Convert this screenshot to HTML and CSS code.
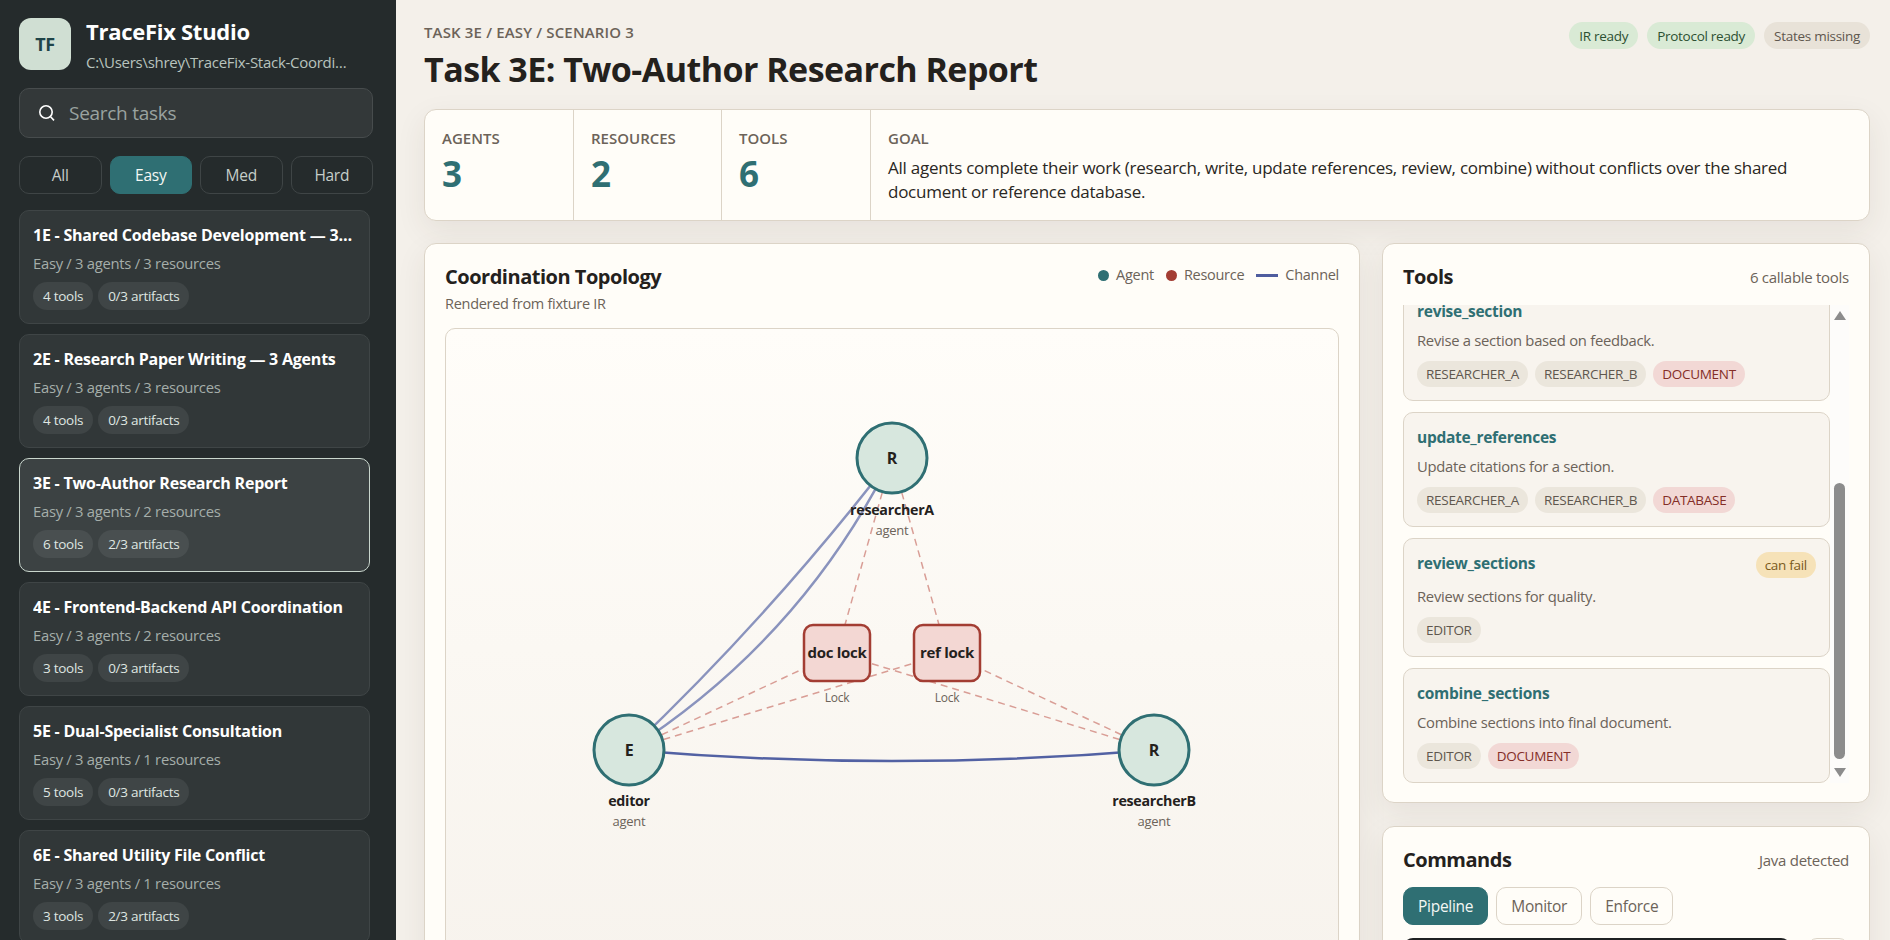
FILE: index.html
```html
<!DOCTYPE html>
<html lang="en">

<head>
    <meta charset="UTF-8">
    <meta name="viewport" content="width=device-width, initial-scale=1.0">
    <title>TraceFix Studio</title>
    <link rel="stylesheet" href="styles.css">
</head>

<body>
    <div class="app">
        <aside class="sidebar">
            <div class="brand">
                <div class="brand-logo">TF</div>
                <div class="brand-text">
                    <h1 class="brand-name">TraceFix Studio</h1>
                    <p class="brand-path">C:\Users\shrey\TraceFix-Stack-Coordination</p>
                </div>
            </div>
            <label class="search">
                <svg class="search-icon" viewBox="0 0 18 18" width="18" height="18" fill="none" stroke="#ffffff" stroke-width="1.6">
                    <circle cx="8" cy="8" r="6.2"></circle>
                    <path d="M12.6 12.8 16 16.4"></path>
                </svg>
                <span class="search-placeholder">Search tasks</span>
            </label>
            <div class="filters">
                <button class="filter">All</button>
                <button class="filter active">Easy</button>
                <button class="filter">Med</button>
                <button class="filter">Hard</button>
            </div>
            <div class="task-list">
                <div class="task-card">
                    <div class="task-title">1E - Shared Codebase Development — 3 Agents</div>
                    <div class="task-meta">Easy / 3 agents / 3 resources</div>
                    <div class="task-chips"><span class="chip">4 tools</span><span class="chip">0/3 artifacts</span></div>
                </div>
                <div class="task-card">
                    <div class="task-title">2E - Research Paper Writing — 3 Agents</div>
                    <div class="task-meta">Easy / 3 agents / 3 resources</div>
                    <div class="task-chips"><span class="chip">4 tools</span><span class="chip">0/3 artifacts</span></div>
                </div>
                <div class="task-card selected">
                    <div class="task-title">3E - Two-Author Research Report</div>
                    <div class="task-meta">Easy / 3 agents / 2 resources</div>
                    <div class="task-chips"><span class="chip">6 tools</span><span class="chip">2/3 artifacts</span></div>
                </div>
                <div class="task-card">
                    <div class="task-title">4E - Frontend-Backend API Coordination</div>
                    <div class="task-meta">Easy / 3 agents / 2 resources</div>
                    <div class="task-chips"><span class="chip">3 tools</span><span class="chip">0/3 artifacts</span></div>
                </div>
                <div class="task-card">
                    <div class="task-title">5E - Dual-Specialist Consultation</div>
                    <div class="task-meta">Easy / 3 agents / 1 resources</div>
                    <div class="task-chips"><span class="chip">5 tools</span><span class="chip">0/3 artifacts</span></div>
                </div>
                <div class="task-card">
                    <div class="task-title">6E - Shared Utility File Conflict</div>
                    <div class="task-meta">Easy / 3 agents / 1 resources</div>
                    <div class="task-chips"><span class="chip">3 tools</span><span class="chip">2/3 artifacts</span></div>
                </div>
            </div>
        </aside>

        <main class="main">
            <header class="page-head">
                <div>
                    <div class="eyebrow">Task 3E / Easy / Scenario 3</div>
                    <h2 class="page-title">Task 3E: Two-Author Research Report</h2>
                </div>
                <div class="badges">
                    <span class="badge ready">IR ready</span>
                    <span class="badge ready">Protocol ready</span>
                    <span class="badge missing">States missing</span>
                </div>
            </header>

            <section class="stats panel">
                <div class="stat">
                    <div class="stat-label">Agents</div>
                    <div class="stat-value">3</div>
                </div>
                <div class="stat">
                    <div class="stat-label">Resources</div>
                    <div class="stat-value">2</div>
                </div>
                <div class="stat">
                    <div class="stat-label">Tools</div>
                    <div class="stat-value">6</div>
                </div>
                <div class="stat goal">
                    <div class="stat-label">Goal</div>
                    <p class="goal-text">All agents complete their work (research, write, update references, review, combine) without conflicts over the shared document or reference database.</p>
                </div>
            </section>

            <div class="columns">
                <section class="panel topology">
                    <div class="topology-head">
                        <div>
                            <h3 class="panel-title">Coordination Topology</h3>
                            <p class="panel-sub">Rendered from fixture IR</p>
                        </div>
                        <div class="legend">
                            <span class="legend-item"><i class="dot agent"></i>Agent</span>
                            <span class="legend-item"><i class="dot resource"></i>Resource</span>
                            <span class="legend-item"><i class="line"></i>Channel</span>
                        </div>
                    </div>
                    <div class="canvas">
                        <svg class="graph" viewBox="0 0 892 640" width="892" height="640">
                            <g class="edge-lock">
                                <path d="M446 129 391 324"></path>
                                <path d="M446 129 501 324"></path>
                                <path d="M183 421 391 324"></path>
                                <path d="M183 421 501 324"></path>
                                <path d="M708 421 391 324"></path>
                                <path d="M708 421 501 324"></path>
                            </g>
                            <g class="edge-channel faded">
                                <path d="M183 421 Q326 285 446 129"></path>
                                <path d="M183 421 Q355 311 446 129"></path>
                            </g>
                            <g class="edge-channel">
                                <path d="M183 421 Q446 443 708 421"></path>
                            </g>

                            <rect class="res-box" x="358" y="296" width="66" height="56" rx="9"></rect>
                            <text class="res-name" x="391" y="329">doc lock</text>
                            <text class="node-kind small" x="391" y="373">Lock</text>
                            <rect class="res-box" x="468" y="296" width="66" height="56" rx="9"></rect>
                            <text class="res-name" x="501" y="329">ref lock</text>
                            <text class="node-kind small" x="501" y="373">Lock</text>

                            <circle class="node" cx="446" cy="129" r="35"></circle>
                            <text class="node-letter" x="446" y="135">R</text>
                            <text class="node-name" x="446" y="186">researcherA</text>
                            <text class="node-kind" x="446" y="206">agent</text>

                            <circle class="node" cx="183" cy="421" r="35"></circle>
                            <text class="node-letter" x="183" y="427">E</text>
                            <text class="node-name" x="183" y="477">editor</text>
                            <text class="node-kind" x="183" y="497">agent</text>

                            <circle class="node" cx="708" cy="421" r="35"></circle>
                            <text class="node-letter" x="708" y="427">R</text>
                            <text class="node-name" x="708" y="477">researcherB</text>
                            <text class="node-kind" x="708" y="497">agent</text>
                        </svg>
                    </div>
                </section>

                <div class="side">
                    <section class="panel tools">
                        <div class="panel-head">
                            <h3 class="panel-title">Tools</h3>
                            <span class="panel-note">6 callable tools</span>
                        </div>
                        <div class="tools-body">
                            <div class="tool-list">
                                <div class="tool-card">
                                    <div class="tool-name">revise_section</div>
                                    <p class="tool-desc">Revise a section based on feedback.</p>
                                    <div class="tags"><span class="tag">RESEARCHER_A</span><span class="tag">RESEARCHER_B</span><span class="tag res">DOCUMENT</span></div>
                                </div>
                                <div class="tool-card">
                                    <div class="tool-name">update_references</div>
                                    <p class="tool-desc">Update citations for a section.</p>
                                    <div class="tags"><span class="tag">RESEARCHER_A</span><span class="tag">RESEARCHER_B</span><span class="tag res">DATABASE</span></div>
                                </div>
                                <div class="tool-card">
                                    <div class="tool-top">
                                        <div class="tool-name">review_sections</div>
                                        <span class="tag warn">can fail</span>
                                    </div>
                                    <p class="tool-desc">Review sections for quality.</p>
                                    <div class="tags"><span class="tag">EDITOR</span></div>
                                </div>
                                <div class="tool-card">
                                    <div class="tool-name">combine_sections</div>
                                    <p class="tool-desc">Combine sections into final document.</p>
                                    <div class="tags"><span class="tag">EDITOR</span><span class="tag res">DOCUMENT</span></div>
                                </div>
                            </div>
                            <div class="scrollbar">
                                <i class="arrow up"></i>
                                <div class="scroll-track"><div class="scroll-thumb"></div></div>
                                <i class="arrow down"></i>
                            </div>
                        </div>
                    </section>

                    <section class="panel commands">
                        <div class="panel-head">
                            <h3 class="panel-title">Commands</h3>
                            <span class="panel-note">Java detected</span>
                        </div>
                        <div class="cmd-tabs">
                            <button class="cmd-tab active">Pipeline</button>
                            <button class="cmd-tab">Monitor</button>
                            <button class="cmd-tab">Enforce</button>
                        </div>
                        <div class="cmd-row">
                            <div class="cmd-box"></div>
                            <button class="cmd-copy"></button>
                        </div>
                    </section>
                </div>
            </div>
        </main>
    </div>
</body>

</html>
```

FILE: styles.css
```css
* {
    box-sizing: border-box;
}

html,
body {
    margin: 0;
    padding: 0;
    height: 100%;
    overflow: hidden;
}

body {
    font-family: "Open Sans", "Noto Sans", sans-serif;
    font-size: 14px;
    letter-spacing: -0.02em;
    color: #24211d;
    background-color: #f4f0ea;
}

h1,
h2,
h3,
p {
    margin: 0;
    padding: 0;
}

button {
    font-family: inherit;
    letter-spacing: inherit;
}

.app {
    display: flex;
    height: 940px;
    overflow: hidden;
}

/* sidebar */

.sidebar {
    width: 396px;
    flex-shrink: 0;
    padding: 18px 23px 0 19px;
    background-color: #252b2c;
    overflow: hidden;
}

.brand {
    display: flex;
    align-items: center;
    gap: 15px;
    height: 52px;
}

.brand-logo {
    width: 52px;
    height: 52px;
    flex-shrink: 0;
    display: flex;
    align-items: center;
    justify-content: center;
    border-radius: 12px;
    background-color: #d0dfd3;
    color: #1f4448;
    font-size: 18px;
    font-weight: 700;
}

.brand-text {
    min-width: 0;
}

.brand-name {
    font-size: 22px;
    line-height: 28px;
    font-weight: 700;
    color: #ffffff;
}

.brand-path {
    margin-top: 7px;
    width: 266px;
    font-size: 15px;
    line-height: 20px;
    color: #b8c3be;
    white-space: nowrap;
    overflow: hidden;
    text-overflow: ellipsis;
}

.search {
    display: flex;
    align-items: center;
    gap: 13px;
    height: 50px;
    margin-top: 18px;
    padding: 0 18px;
    border: 1px solid #474c4d;
    border-radius: 10px;
    background-color: #333839;
}

.search-icon {
    flex-shrink: 0;
}

.search-placeholder {
    font-size: 19px;
    color: #9aa3a0;
}

.filters {
    display: flex;
    gap: 8px;
    margin-top: 18px;
}

.filter {
    flex: 1;
    height: 38px;
    padding: 0;
    border: 1px solid #3f4546;
    border-radius: 10px;
    background: transparent;
    color: #c5cec9;
    font-size: 15.5px;
}

.filter.active {
    border-color: #2f6f73;
    background-color: #2f6f73;
    color: #f4f7f3;
}

.task-list {
    display: flex;
    flex-direction: column;
    gap: 10px;
    margin-top: 16px;
    width: 351px;
}

.task-card {
    flex-shrink: 0;
    height: 114px;
    padding: 13px 13px 0;
    border: 1px solid #3f4546;
    border-radius: 10px;
    background-color: #313738;
}

.task-card.selected {
    border-color: #c9d6cd;
    background-color: #3c4243;
}

.task-title {
    font-size: 16px;
    line-height: 22px;
    font-weight: 700;
    letter-spacing: -0.014em;
    color: #ffffff;
    white-space: nowrap;
    overflow: hidden;
    text-overflow: ellipsis;
}

.task-meta {
    margin-top: 7px;
    font-size: 14.8px;
    line-height: 20px;
    color: #a5aeaa;
}

.task-chips {
    display: flex;
    gap: 5px;
    margin-top: 9px;
}

.chip {
    height: 28px;
    padding: 0 10px;
    display: flex;
    align-items: center;
    border-radius: 14px;
    background-color: #3f4546;
    color: #dfe6e1;
    font-size: 13.5px;
}

.task-card.selected .chip {
    background-color: #494f50;
}

/* main area */

.main {
    flex: 1;
    min-width: 0;
    padding: 21px 20px 0 28px;
    overflow: hidden;
}

.page-head {
    display: flex;
    justify-content: space-between;
    align-items: flex-start;
    height: 88px;
}

.eyebrow {
    font-size: 15px;
    line-height: 22px;
    font-weight: 600;
    letter-spacing: 0.01em;
    color: #6c6359;
    text-transform: uppercase;
}

.page-title {
    margin-top: 4px;
    font-size: 34px;
    line-height: 44px;
    font-weight: 700;
    letter-spacing: -0.016em;
    color: #24211d;
}

.badges {
    display: flex;
    gap: 9px;
    margin-top: 1px;
}

.badge {
    height: 27px;
    padding: 0 10px;
    display: flex;
    align-items: center;
    border-radius: 14px;
    font-size: 13.5px;
}

.badge.ready {
    background-color: #d9ead5;
    color: #2d5032;
}

.badge.missing {
    background-color: #e8e2d8;
    color: #5f574e;
}

.panel {
    border: 1px solid #dcd4c7;
    border-radius: 12px;
    background-color: #fffdf8;
    box-shadow: 0 10px 30px rgba(60, 50, 35, 0.08);
}

.stats {
    display: grid;
    grid-template-columns: 149px 148px 149px 1fr;
    height: 112px;
}

.stat {
    padding: 18px 17px 0;
    border-right: 1px solid #dcd4c7;
}

.stat.goal {
    border-right: none;
}

.stat-label {
    font-size: 15px;
    line-height: 20px;
    font-weight: 600;
    letter-spacing: 0;
    color: #6c6359;
    text-transform: uppercase;
}

.stat-value {
    margin-top: 4px;
    font-size: 35px;
    line-height: 44px;
    font-weight: 700;
    color: #2f6f73;
}

.goal-text {
    margin-top: 8px;
    font-size: 17px;
    line-height: 24px;
    letter-spacing: -0.015em;
    color: #2a2723;
}

.columns {
    display: grid;
    grid-template-columns: minmax(0, 1fr) 488px;
    gap: 22px;
    margin-top: 22px;
}

.topology {
    padding: 20px 20px 0;
    height: 720px;
}

.topology-head {
    display: flex;
    justify-content: space-between;
    align-items: flex-start;
}

.panel-title {
    font-size: 20px;
    line-height: 26px;
    font-weight: 700;
    letter-spacing: -0.024em;
    color: #24211d;
}

.panel-sub {
    margin-top: 4px;
    font-size: 14.5px;
    line-height: 20px;
    color: #6c6359;
}

.legend {
    display: flex;
    gap: 12px;
    padding-top: 1px;
}

.legend-item {
    display: flex;
    align-items: center;
    gap: 7px;
    font-size: 14.5px;
    line-height: 20px;
    color: #6c6359;
}

.dot {
    width: 11px;
    height: 11px;
    border-radius: 50%;
}

.dot.agent {
    background-color: #2f6f73;
}

.dot.resource {
    background-color: #a33d33;
}

.line {
    width: 22px;
    height: 3px;
    background-color: #4f5d9f;
}

.canvas {
    height: 640px;
    margin-top: 14px;
    border: 1px solid #dcd4c7;
    border-radius: 10px;
    background: linear-gradient(180deg, #fffdf9 0%, #f7f3ed 100%);
    overflow: hidden;
}

.graph {
    display: block;
}

.edge-lock path {
    fill: none;
    stroke: #d99e96;
    stroke-width: 1.5;
    stroke-dasharray: 7 5;
}

.edge-channel path {
    fill: none;
    stroke: #5261a3;
    stroke-width: 2.5;
}

.edge-channel.faded path {
    stroke: #8a93bd;
}

.node {
    fill: #d7e7de;
    stroke: #2f6f73;
    stroke-width: 3;
}

.res-box {
    fill: #f3d7d3;
    stroke: #a33d33;
    stroke-width: 2.5;
}

.node-letter,
.node-name,
.res-name,
.node-kind {
    text-anchor: middle;
}

.node-letter {
    font-size: 16px;
    font-weight: 700;
    fill: #24211d;
}

.node-name {
    font-size: 14.25px;
    font-weight: 700;
    fill: #24211d;
}

.res-name {
    font-size: 15px;
    font-weight: 700;
    fill: #24211d;
}

.node-kind {
    font-size: 13px;
    fill: #6c6359;
}

.node-kind.small {
    font-size: 12px;
}

.side {
    display: flex;
    flex-direction: column;
    gap: 23px;
    min-width: 0;
}

.panel-head {
    display: flex;
    justify-content: space-between;
    align-items: center;
}

.panel-note {
    font-size: 15px;
    color: #6c6359;
}

.tools {
    height: 560px;
    padding: 20px;
}

.tools-body {
    display: flex;
    height: 478px;
    margin-top: 15px;
}

.tool-list {
    flex: 1;
    min-width: 0;
    display: flex;
    flex-direction: column;
    justify-content: flex-end;
    gap: 11px;
    overflow: hidden;
}

.tool-card {
    flex-shrink: 0;
    padding: 13px 13px 0;
    height: 115px;
    border: 1px solid #dcd4c7;
    border-radius: 10px;
    background-color: #f8f4ee;
}

.tool-name {
    font-size: 15.5px;
    line-height: 22px;
    font-weight: 700;
    color: #2f6f73;
}

.tool-top {
    display: flex;
    justify-content: space-between;
    align-items: flex-start;
}

.tool-card:has(.tool-top) {
    height: 119px;
}

.tool-desc {
    margin-top: 8px;
    font-size: 14.8px;
    line-height: 20px;
    color: #6c6359;
}

.tags {
    display: flex;
    gap: 7px;
    margin-top: 11px;
}

.tag {
    height: 26px;
    padding: 0 9px;
    display: flex;
    align-items: center;
    border-radius: 13px;
    background-color: #ebe6dc;
    color: #5f574e;
    font-size: 13.5px;
}

.tag.res {
    background-color: #f2d8d5;
    color: #842e27;
}

.tag.warn {
    background-color: #f6e2b8;
    color: #7a5a1c;
}

.scrollbar {
    width: 19px;
    flex-shrink: 0;
    display: flex;
    flex-direction: column;
    align-items: center;
    background-color: #fdfcfa;
}

.arrow {
    width: 0;
    height: 0;
    flex-shrink: 0;
    border-left: 6px solid transparent;
    border-right: 6px solid transparent;
}

.arrow.up {
    margin-top: 6px;
    border-bottom: 9px solid #8c8c8c;
}

.arrow.down {
    margin-bottom: 6px;
    border-top: 9px solid #8c8c8c;
}

.scroll-track {
    flex: 1;
    width: 11px;
    padding-top: 163px;
    padding-bottom: 9px;
}

.scroll-thumb {
    height: 100%;
    border-radius: 6px;
    background-color: #8c8c8c;
}

.commands {
    height: 200px;
    padding: 20px;
}

.cmd-tabs {
    display: flex;
    gap: 8px;
    margin-top: 14px;
}

.cmd-tab {
    height: 38px;
    padding: 0 14px;
    border: 1px solid #dcd4c7;
    border-radius: 10px;
    background-color: #fffdf8;
    color: #6c6359;
    font-size: 15.5px;
}

.cmd-tab.active {
    border-color: #2f6f73;
    background-color: #2f6f73;
    color: #f4f7f3;
}

.cmd-row {
    display: flex;
    justify-content: space-between;
    margin-top: 13px;
}

.cmd-box {
    width: 388px;
    height: 60px;
    border-radius: 10px;
    background-color: #1f2122;
}

.cmd-copy {
    width: 42px;
    height: 40px;
    border: 1px solid #dcd4c7;
    border-radius: 10px;
    background-color: #fffdf8;
}
```
